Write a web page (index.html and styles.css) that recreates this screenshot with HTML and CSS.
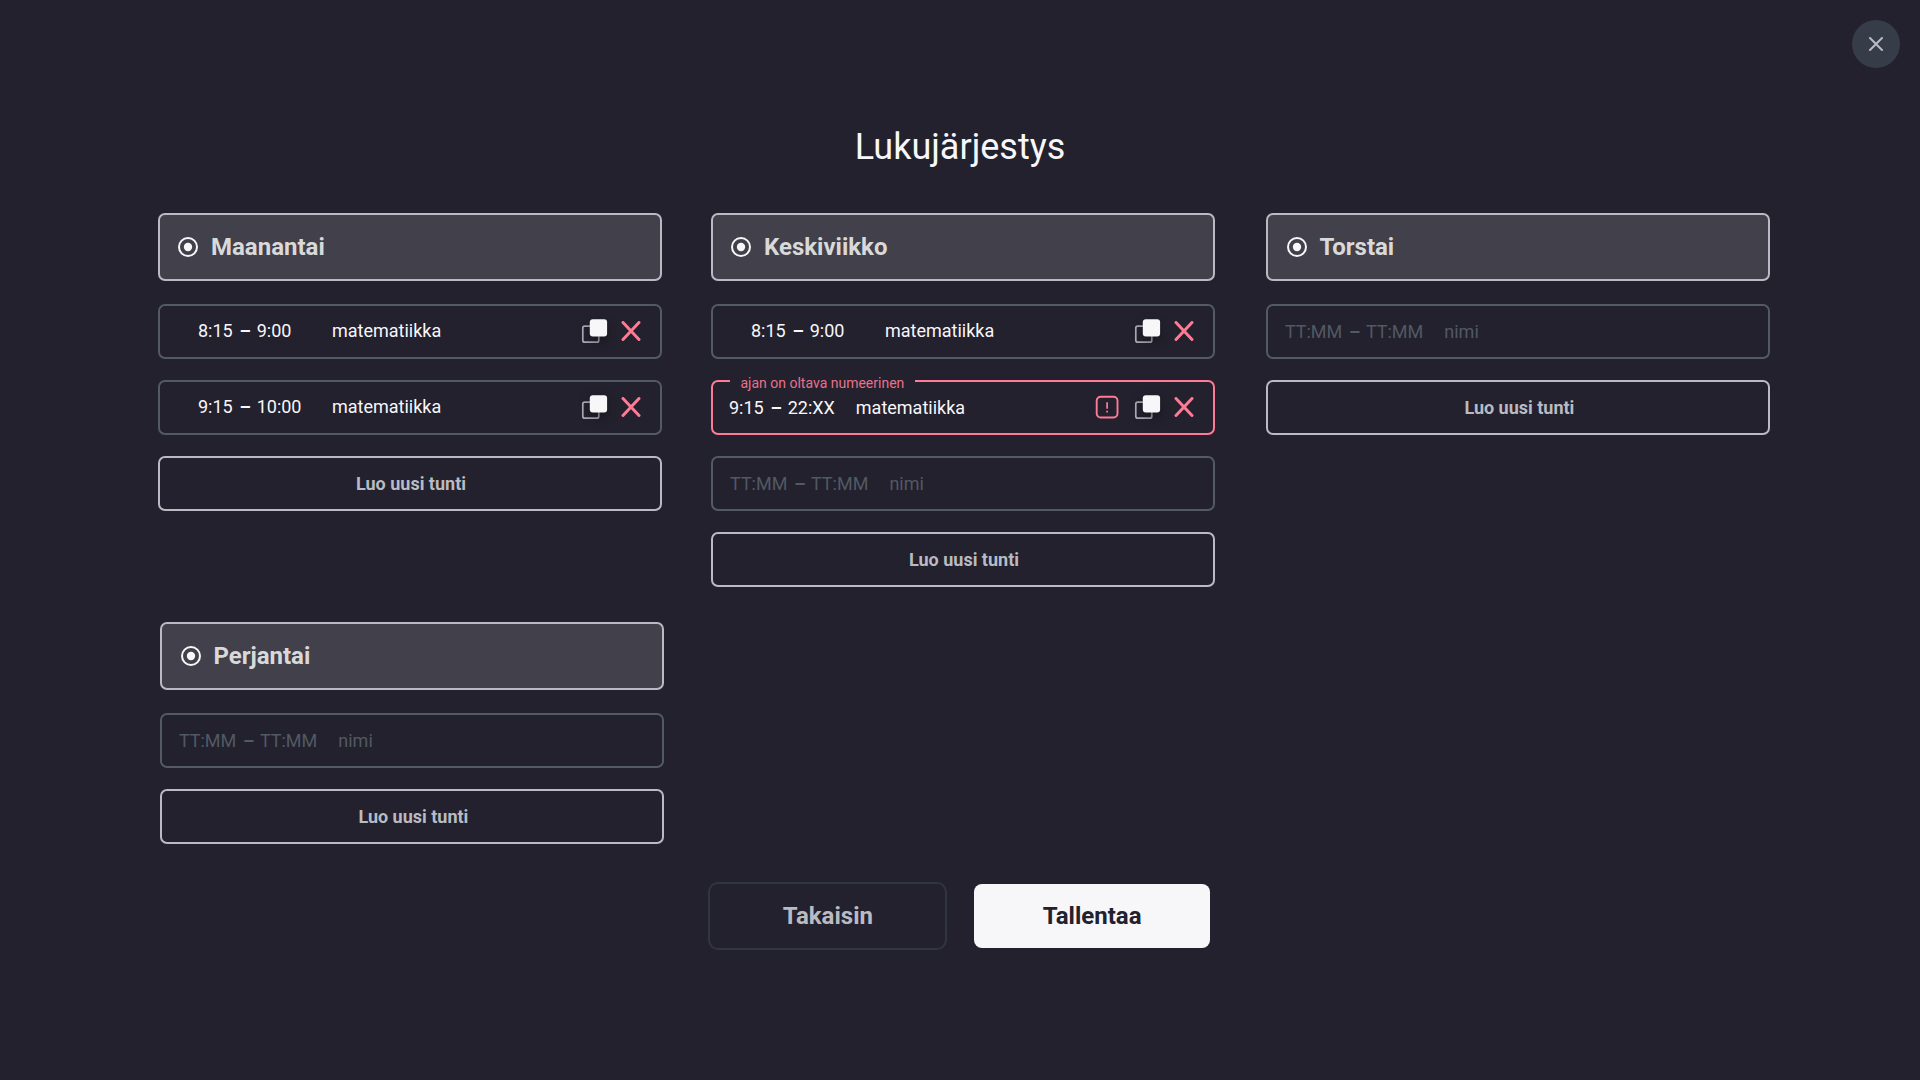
FILE: index.html
```html
<!DOCTYPE html>
<html lang="fi">
<head>
<meta charset="utf-8">
<title>Lukujärjestys</title>
<link rel="stylesheet" href="styles.css">
</head>
<body>
<svg class="sprite" aria-hidden="true">
  <symbol id="radio" viewBox="0 0 20 20"><circle cx="10" cy="10" r="9" fill="none" stroke="#f7f7fa" stroke-width="2"/><circle cx="10" cy="10" r="4.2" fill="#f7f7fa"/></symbol>
  <symbol id="copy" viewBox="0 0 40 40"><rect x="5.8" y="14.2" width="16" height="16" rx="2" fill="none" stroke="#a9abb5" stroke-width="1.7"/><rect class="copy-front" x="12.8" y="7.2" width="17.3" height="17.3" rx="3"/></symbol>
  <symbol id="cross" viewBox="0 0 20 20"><path d="M2 1.5 18 18.5M18 1.5 2 18.5" fill="none" stroke="#ff7b95" stroke-width="3" stroke-linecap="round"/></symbol>
  <symbol id="alert" viewBox="0 0 24 24"><rect x="1.7" y="1.7" width="20.8" height="20.8" rx="4" fill="none" stroke="#ff7b95" stroke-width="1.9"/><path d="M12.1 7.2v6.6M12.1 15.8v1.7" stroke="#ff7b95" stroke-width="1.7"/></symbol>
</svg>
<main class="page">
  <div class="topbar">
    <button class="close" aria-label="Sulje"><svg width="14" height="14" viewBox="0 0 14 14"><path d="M1 1 13 13M13 1 1 13" fill="none" stroke="#b9bbc3" stroke-width="2" stroke-linecap="round"/></svg></button>
  </div>
  <h1 class="title">Lukujärjestys</h1>
  <div class="days">
    <section class="day">
      <h2 class="day-head"><svg class="radio"><use href="#radio"/></svg><span>Maanantai</span></h2>
      <div class="row filled"><span class="time">8:15 <span class="dash">–</span> 9:00</span><span class="name">matematiikka</span><svg class="copy"><use href="#copy"/></svg><svg class="cross"><use href="#cross"/></svg></div>
      <div class="row filled"><span class="time">9:15 <span class="dash">–</span> 10:00</span><span class="name">matematiikka</span><svg class="copy"><use href="#copy"/></svg><svg class="cross"><use href="#cross"/></svg></div>
      <button class="row add">Luo uusi tunti</button>
    </section>
    <section class="day">
      <h2 class="day-head"><svg class="radio"><use href="#radio"/></svg><span>Keskiviikko</span></h2>
      <div class="row filled"><span class="time">8:15 <span class="dash">–</span> 9:00</span><span class="name">matematiikka</span><svg class="copy"><use href="#copy"/></svg><svg class="cross"><use href="#cross"/></svg></div>
      <div class="row error"><span class="message">ajan on oltava numeerinen</span><span class="time">9:15 <span class="dash">–</span> 22:XX</span><span class="name">matematiikka</span><svg class="alert"><use href="#alert"/></svg><svg class="copy"><use href="#copy"/></svg><svg class="cross"><use href="#cross"/></svg></div>
      <div class="row empty"><span class="time">TT:MM <span class="dash">–</span> TT:MM</span><span class="name">nimi</span></div>
      <button class="row add">Luo uusi tunti</button>
    </section>
    <section class="day day-thursday">
      <h2 class="day-head"><svg class="radio"><use href="#radio"/></svg><span>Torstai</span></h2>
      <div class="row empty"><span class="time">TT:MM <span class="dash">–</span> TT:MM</span><span class="name">nimi</span></div>
      <button class="row add">Luo uusi tunti</button>
    </section>
    <section class="day day-friday">
      <h2 class="day-head"><svg class="radio"><use href="#radio"/></svg><span>Perjantai</span></h2>
      <div class="row empty"><span class="time">TT:MM <span class="dash">–</span> TT:MM</span><span class="name">nimi</span></div>
      <button class="row add">Luo uusi tunti</button>
    </section>
  </div>
  <div class="actions">
    <button class="back">Takaisin</button>
    <button class="save">Tallentaa</button>
  </div>
</main>
</body>
</html>
```
FILE: styles.css
```css
* { box-sizing: border-box; }
body { margin: 0; background: #23212d; color: #f7f7fa; font-family: Roboto, sans-serif; }
button { font-family: inherit; padding: 0; }
svg { display: block; flex: none; }
.sprite { position: absolute; width: 0; height: 0; }
.page { height: 1080px; display: flex; flex-direction: column; overflow: hidden; }
.topbar { display: flex; justify-content: flex-end; padding: 20px 20px 0; }
.close { width: 48px; height: 48px; border: 0; border-radius: 50%; background: #373c49; display: flex; align-items: center; justify-content: center; }
.title { margin: 57px 0 0; height: 44px; line-height: 44px; font-size: 36px; font-weight: 400; text-align: center; }
.days { display: grid; grid-template-columns: repeat(3, 504px); column-gap: 50px; row-gap: 35px; padding: 44px 0 0 158px; align-items: start; }
.day { display: flex; flex-direction: column; gap: 21px; }
.day:nth-child(2) { margin-left: -1px; margin-right: 1px; }
.day-thursday { margin-left: 0.4px; margin-right: -0.4px; }
.day-friday { margin-left: 2.4px; margin-right: -2.4px; }
.day-thursday .radio, .day-friday .radio { margin: 0 -0.4px 0 0.4px; }
.day-head { margin: 0 0 2px; height: 68px; border: 2px solid #b9bbc3; border-radius: 7px; background: #42404a; color: #d9d9d9; font-size: 24px; line-height: 28px; font-weight: 700; display: flex; align-items: center; padding: 0 18px; gap: 13px; }
.radio { width: 20px; height: 20px; }
.row { height: 55px; border: 2px solid #525a66; border-radius: 7px; display: flex; align-items: center; font-size: 18px; line-height: 22px; }
.time, .name { white-space: pre; }
.dash { display: inline-block; width: 15px; padding-left: 1px; text-align: center; font-weight: 700; }
.filled { padding-left: 38px; }
.filled .time { width: 134px; padding-bottom: 1px; }
.filled .name { padding-bottom: 1px; }
.name { flex: 1; }
.copy { width: 40px; height: 40px; margin-right: 4px; }
.cross { width: 20px; height: 20px; margin: 0 19px 1px 0; }
.copy-front { fill: #f7f7fa; filter: drop-shadow(0 4px 5px rgba(10, 9, 16, .5)); }
.empty { padding-left: 17px; color: #515964; }
.day-thursday .empty, .day-friday .empty { padding-left: 16.5px; }
.empty .time, .error .time { margin-right: 21px; }
.add { width: 100%; background: none; border-color: #b9bbc3; color: #b9bbc3; font-weight: 700; justify-content: center; padding-left: 2px; }
.error { position: relative; padding-left: 16px; border-color: #ff7b95; }
.alert { width: 24px; height: 24px; margin: 0 11px 1px 0; }
.message { position: absolute; left: 17px; top: -8px; padding: 0 10.5px; background: #23212d; color: #e8718c; font-size: 14px; line-height: 18px; white-space: nowrap; }
.actions { display: flex; align-items: center; gap: 27px; padding: 38px 0 0 708.4px; }
.back, .save { font-size: 24px; font-weight: 700; line-height: 28px; }
.back { width: 239px; height: 68px; background: none; border: 2px solid #30353f; border-radius: 10px; color: #b9bbc3; }
.save { width: 235.4px; height: 64px; border: 0; border-radius: 8px; background: #f7f7fa; color: #23212d; }
```
